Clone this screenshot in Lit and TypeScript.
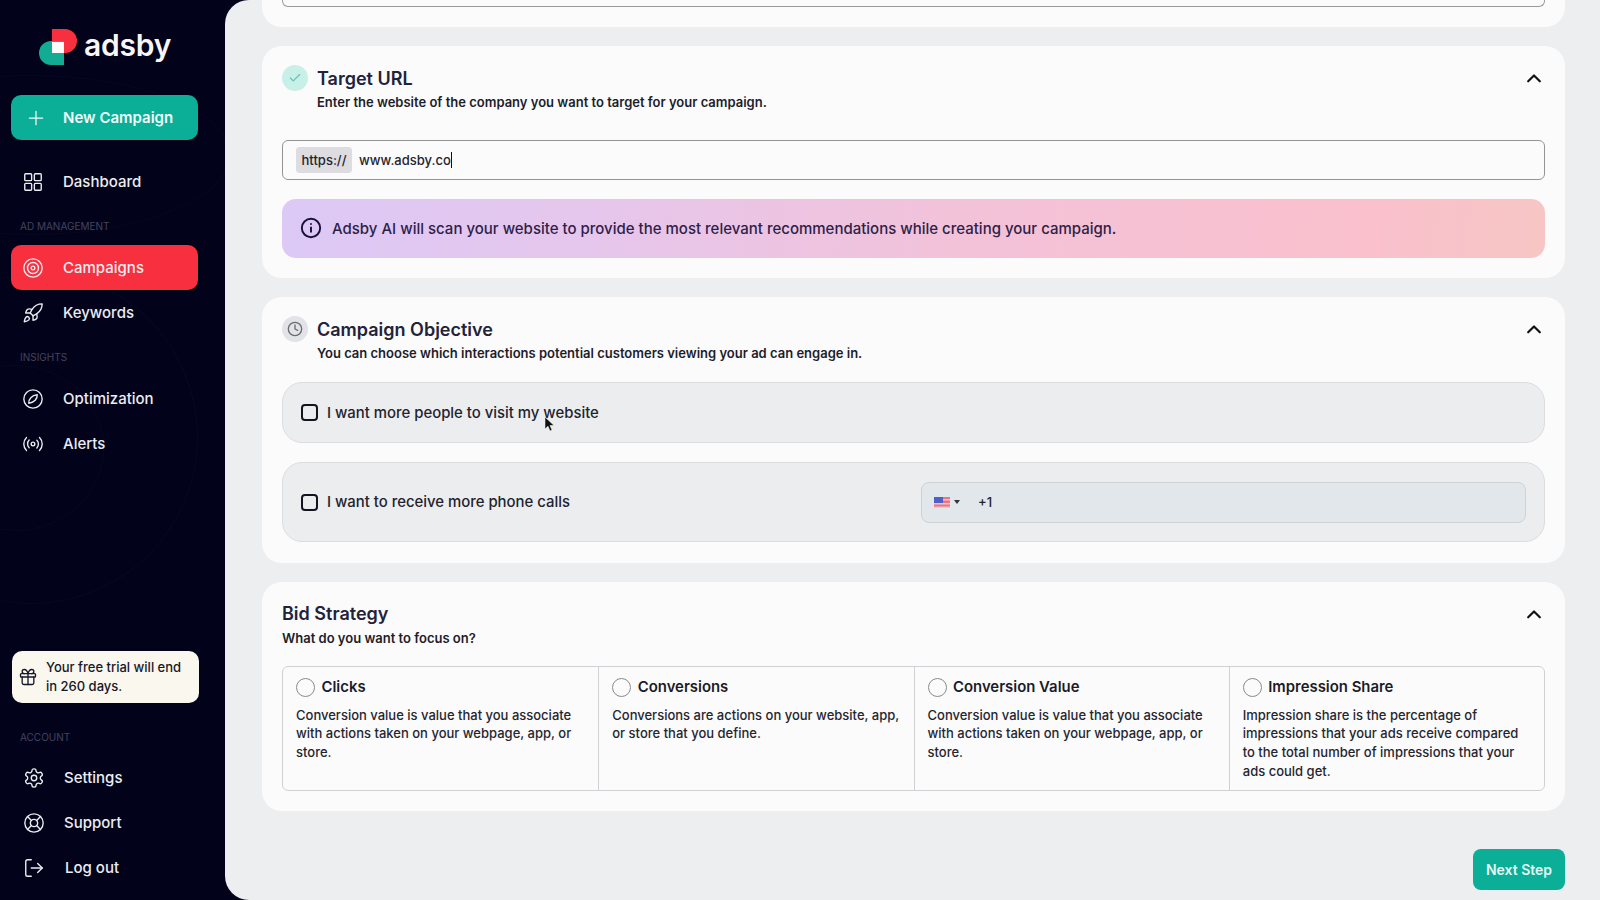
import { LitElement, html, css, svg } from "lit";
import { customElement } from "lit/decorators.js";

const icons: Record<string, unknown> = {
  plus: svg`<path d="M12 4v16M4 12h16"/>`,
  grid: svg`<rect x="3" y="3" width="7.5" height="7.5" rx="1"/><rect x="13.5" y="3" width="7.5" height="7.5" rx="1"/><rect x="13.5" y="13.5" width="7.5" height="7.5" rx="1"/><rect x="3" y="13.5" width="7.5" height="7.5" rx="1"/>`,
  target: svg`<circle cx="12" cy="12" r="10"/><circle cx="12" cy="12" r="6"/><circle cx="12" cy="12" r="2"/>`,
  rocket: svg`<path d="M4.5 16.5c-1.5 1.26-2 5-2 5s3.74-.5 5-2c.71-.84.7-2.13-.09-2.91a2.18 2.18 0 0 0-2.91-.09z"/><path d="m12 15-3-3a22 22 0 0 1 2-3.95A12.88 12.88 0 0 1 22 2c0 2.72-.78 7.5-6 11a22.35 22.35 0 0 1-4 2z"/><path d="M9 12H4s.55-3.03 2-4c1.62-1.08 5 0 5 0"/><path d="M12 15v5s3.03-.55 4-2c1.08-1.62 0-5 0-5"/>`,
  compass: svg`<circle cx="12" cy="12" r="10"/><path d="M16.6 7.4c.4 4.4-3.2 8.6-9.2 9.2-.4-4.4 3.2-8.6 9.2-9.2z"/>`,
  radio: svg`<path d="M4.9 19.1C1 15.2 1 8.8 4.9 4.9"/><path d="M7.8 16.2c-2.3-2.3-2.3-6.1 0-8.5"/><circle cx="12" cy="12" r="2"/><path d="M16.2 7.8c2.3 2.3 2.3 6.1 0 8.5"/><path d="M19.1 4.9C23 8.8 23 15.1 19.1 19"/>`,
  settings: svg`<path d="M12.22 2h-.44a2 2 0 0 0-2 2v.18a2 2 0 0 1-1 1.73l-.43.25a2 2 0 0 1-2 0l-.15-.08a2 2 0 0 0-2.73.73l-.22.38a2 2 0 0 0 .73 2.73l.15.1a2 2 0 0 1 1 1.72v.51a2 2 0 0 1-1 1.74l-.15.09a2 2 0 0 0-.73 2.73l.22.38a2 2 0 0 0 2.73.73l.15-.08a2 2 0 0 1 2 0l.43.25a2 2 0 0 1 1 1.73V20a2 2 0 0 0 2 2h.44a2 2 0 0 0 2-2v-.18a2 2 0 0 1 1-1.73l.43-.25a2 2 0 0 1 2 0l.15.08a2 2 0 0 0 2.73-.73l.22-.39a2 2 0 0 0-.73-2.73l-.15-.08a2 2 0 0 1-1-1.74v-.5a2 2 0 0 1 1-1.74l.15-.09a2 2 0 0 0 .73-2.73l-.22-.38a2 2 0 0 0-2.73-.73l-.15.08a2 2 0 0 1-2 0l-.43-.25a2 2 0 0 1-1-1.73V4a2 2 0 0 0-2-2z"/><circle cx="12" cy="12" r="3"/>`,
  support: svg`<circle cx="12" cy="12" r="10"/><circle cx="12" cy="12" r="4"/><path d="m4.93 4.93 4.24 4.24M14.83 9.17l4.24-4.24M14.83 14.83l4.24 4.24M9.17 14.83l-4.24 4.24"/>`,
  logout: svg`<path d="M9 21H5a2 2 0 0 1-2-2V5a2 2 0 0 1 2-2h4"/><path d="m16 17 5-5-5-5"/><path d="M21 12H9"/>`,
  gift: svg`<rect x="3" y="8" width="18" height="4" rx="1"/><path d="M12 8v13"/><path d="M19 12v7a2 2 0 0 1-2 2H7a2 2 0 0 1-2-2v-7"/><path d="M7.5 8a2.5 2.5 0 0 1 0-5A4.8 8 0 0 1 12 8a4.8 8 0 0 1 4.5-5 2.5 2.5 0 0 1 0 5"/>`,
  clock: svg`<circle cx="12" cy="12" r="10"/><path d="M12 6v6l4 2"/>`,
  check: svg`<path d="M20 6 9 17l-5-5"/>`,
  info: svg`<circle cx="12" cy="12" r="10"/><path d="M12 16v-4.5M12 7.6h.01"/>`,
  chevron: svg`<path d="m5 16 7-7 7 7"/>`,
};

function icon(name: string, cls: string) {
  return html`<svg class=${cls} viewBox="0 0 24 24" fill="none" stroke="currentColor" stroke-linecap="round" stroke-linejoin="round">${icons[name]}</svg>`;
}

const bids = [
  { t: "Clicks", d: "Conversion value is value that you associate with actions taken on your webpage, app, or store." },
  { t: "Conversions", d: "Conversions are actions on your website, app, or store that you define." },
  { t: "Conversion Value", d: "Conversion value is value that you associate with actions taken on your webpage, app, or store." },
  { t: "Impression Share", d: "Impression share is the percentage of impressions that your ads receive compared to the total number of impressions that your ads could get." },
];

@customElement("app-root")
export class AppRoot extends LitElement {
  static styles = css`
    :host { display: flex; width: 1600px; height: 900px; overflow: hidden; background: #02021b; font-family: Inter, "Liberation Sans", sans-serif; color: #17172a; }
    * { box-sizing: border-box; }

    .side { position: relative; width: 225px; flex: none; height: 900px; padding: 0 0 10px 11px; display: flex; flex-direction: column; color: #f1f1f4; overflow: hidden; }
    .ring { position: absolute; border-radius: 50%; border: 1px solid rgba(255,255,255,.025); pointer-events: none; }
    .ring.a { left: -72px; top: 365px; width: 176px; height: 166px; }
    .ring.b { left: -136px; top: 270px; width: 334px; height: 334px; }
    .ring.c { left: -170px; top: 75px; width: 400px; height: 160px; }
    .logo { position: relative; height: 95px; padding: 28px 0 0 28px; display: flex; align-items: flex-start; gap: 6px; }
    .logo svg { width: 39px; height: 38px; flex: none; }
    .logo span { font-weight: 600; font-size: 30px; line-height: 34px; color: #f7f7f8; letter-spacing: -.2px; }
    .item { position: relative; width: 187px; height: 45px; border-radius: 10px; display: flex; align-items: center; padding-left: 11px; gap: 19px; font-size: 15px; font-weight: 500; color: #ecedf1; flex: none; }
    .item .ic { width: 22px; height: 22px; stroke-width: 1.5; flex: none; }
    .item.new { background: #0bae96; font-weight: 600; color: #f2fbf9; font-size: 15px; padding-left: 15px; gap: 17px; margin-bottom: 19px; }
    .item.new .ic { width: 20px; height: 20px; stroke-width: 1.5; }
    .item.red { background: #f72f3f; }
    .label { position: relative; font-size: 10px; line-height: 12px; color: #43445f; padding-left: 9px; text-transform: uppercase; margin: 16px 0 13px; flex: none; }
    .acct .item { padding-left: 12px; gap: 19px; }
    .acct .item.out { gap: 20px; }
    .trial { position: relative; margin: auto 0 0 1px; width: 187px; height: 52px; background: #f9f7ee; border-radius: 10px; display: flex; align-items: center; gap: 8px; padding-left: 6px; color: #17172a; font-size: 13px; font-weight: 500; line-height: 19px; flex: none; }
    .trial .ic { width: 20px; height: 20px; stroke-width: 1.6; flex: none; }
    .acct { position: relative; margin-top: 28px; }
    .acct .label { margin-top: 0; margin-bottom: 12px; }

    .main { flex: 1; height: 900px; background: #eceef0; border-radius: 24px 0 0 24px; padding: 0 35px 0 37px; display: flex; flex-direction: column; gap: 19px; overflow: hidden; position: relative; }
    .card { background: #fbfbfb; border-radius: 20px; padding: 20px; flex: none; }
    .card.stub { height: 27px; padding: 0 20px 20px; border-radius: 0 0 20px 20px; }
    .stubfield { height: 7px; border: 1.5px solid #9a9a9a; border-top: 0; border-radius: 0 0 6px 6px; }
    .head { display: flex; align-items: center; height: 24px; }
    .badge { width: 26px; height: 26px; border-radius: 50%; display: flex; align-items: center; justify-content: center; margin-right: 9px; flex: none; }
    .badge.ok { background: #c9f0e8; color: #5cc6b0; }
    .badge.ok svg { width: 14px; height: 14px; stroke-width: 2; }
    .badge.wait { background: #e2e3e6; color: #696b73; }
    .badge.wait svg { width: 16px; height: 16px; stroke-width: 2; }
    h2 { margin: 0; padding-top: 2px; font-size: 18px; line-height: 24px; font-weight: 600; color: #22223a; flex: 1; }
    .bidcard h2 { padding-top: 0; }
    .chev { width: 20px; height: 20px; stroke-width: 2.6; color: #111; margin-right: 1px; flex: none; }
    .sub { font-size: 13px; line-height: 20px; font-weight: 600; color: #1d1d2b; margin: 2px 0 0 35px; }
    .sub.flush { margin-left: 0; }

    .url { height: 40px; margin-top: 28px; border: 1.5px solid #949494; border-radius: 6px; display: flex; align-items: center; padding-left: 13px; font-size: 13px; font-weight: 500; color: #24242e; }
    .chip { height: 26px; width: 56px; background: #dcdce1; border-radius: 4px; display: flex; align-items: center; justify-content: center; margin-right: 7px; }
    .caret { width: 1px; height: 16px; background: #111; }
    .info { height: 59px; margin-top: 19px; border-radius: 14px; background: linear-gradient(95deg, #dcc9f6 0%, #e6c6ec 25%, #f3c2d8 55%, #fac0cd 85%, #f7c6c4 100%); display: flex; align-items: center; padding: 0 0 1px 18px; gap: 10px; font-size: 15px; font-weight: 500; color: #2e2148; }
    .info svg { width: 22px; height: 22px; stroke-width: 2.1; color: #17103a; flex: none; }

    .opt { background: #ecedef; border: 1px solid #dcdde0; border-radius: 20px; display: flex; align-items: center; padding-left: 18px; font-size: 14.9px; font-weight: 500; color: #23232e; margin-top: 19px; position: relative; }
    .opt.one { height: 61px; margin-top: 19px; }
    .opt.two { height: 80px; padding-right: 18px; margin-bottom: 1px; }
    .box { width: 17px; height: 17px; border: 2px solid #14141f; border-radius: 4px; margin-right: 9px; flex: none; }
    .phone { margin-left: auto; width: 605px; height: 41px; border: 1px solid #cfd2d5; border-radius: 8px; background: #e1e7ea; display: flex; align-items: center; padding-left: 12px; font-size: 13px; }
    .phone svg.flag { width: 16px; height: 11px; flex: none; filter: blur(.3px); }
    .tri { width: 0; height: 0; border: 3px solid transparent; border-top: 4px solid #333; border-bottom: 0; margin: 0 18px 0 4px; }
    .cursor { position: absolute; left: 262px; top: 34px; width: 10px; height: 15px; }

    .bids { margin-top: 18px; height: 125px; border: 1.5px solid #d0d1d4; border-radius: 6px; display: grid; grid-template-columns: repeat(4, 1fr); }
    .bid { padding: 10px 13px 0 13px; border-left: 1.5px solid #d0d1d4; }
    .bid:first-child { border-left: 0; }
    .bidh { display: flex; align-items: center; gap: 6.5px; height: 20px; font-size: 14.9px; font-weight: 600; color: #1b1b28; }
    .radio { width: 19px; height: 19px; border: 1.5px solid #8a8a8a; border-radius: 50%; flex: none; }
    .bid p { margin: 8.5px 0 0; font-size: 13px; line-height: 18.7px; font-weight: 500; color: #25252f; }

    .next { align-self: flex-end; width: 92px; height: 41px; margin-top: 19px; background: #0bae96; color: #e6f8f4; border-radius: 8px; display: flex; align-items: center; justify-content: center; font-size: 14px; font-weight: 600; flex: none; }
  `;

  render() {
    return html`
      <aside class="side">
        <div class="ring a"></div><div class="ring b"></div><div class="ring c"></div>
        <div class="logo">
          <svg viewBox="0 0 39 38">
            <path d="M13 1H26a12 12 0 0 1 0 24H13z" fill="#f72f3f"/>
            <path d="M25 13V37H12a12 12 0 0 1 0-24z" fill="#12ab94"/>
            <rect x="13" y="14" width="12" height="11" fill="#fbfbfb"/>
          </svg>
          <span>adsby</span>
        </div>
        <div class="item new">${icon("plus", "ic")}New Campaign</div>
        <div class="item">${icon("grid", "ic")}Dashboard</div>
        <div class="label">Ad Management</div>
        <div class="item red">${icon("target", "ic")}Campaigns</div>
        <div class="item">${icon("rocket", "ic")}Keywords</div>
        <div class="label">Insights</div>
        <div class="item">${icon("compass", "ic")}Optimization</div>
        <div class="item">${icon("radio", "ic")}Alerts</div>
        <div class="trial">${icon("gift", "ic")}<span>Your free trial will end<br />in 260 days.</span></div>
        <div class="acct">
          <div class="label">Account</div>
          <div class="item">${icon("settings", "ic")}Settings</div>
          <div class="item">${icon("support", "ic")}Support</div>
          <div class="item out">${icon("logout", "ic")}Log out</div>
        </div>
      </aside>
      <main class="main">
        <section class="card stub"><div class="stubfield"></div></section>

        <section class="card">
          <div class="head">
            <div class="badge ok">${icon("check", "")}</div>
            <h2>Target URL</h2>
            ${icon("chevron", "chev")}
          </div>
          <div class="sub">Enter the website of the company you want to target for your campaign.</div>
          <div class="url"><span class="chip">https://</span><span>www.adsby.co</span><span class="caret"></span></div>
          <div class="info">${icon("info", "")}<span>Adsby AI will scan your website to provide the most relevant recommendations while creating your campaign.</span></div>
        </section>

        <section class="card">
          <div class="head">
            <div class="badge wait">${icon("clock", "")}</div>
            <h2>Campaign Objective</h2>
            ${icon("chevron", "chev")}
          </div>
          <div class="sub">You can choose which interactions potential customers viewing your ad can engage in.</div>
          <div class="opt one">
            <span class="box"></span>I want more people to visit my website
            <svg class="cursor" viewBox="0 0 10 15"><path d="M0 0v12l3-2.8 2 4.8 2-.9-2-4.6h4z" fill="#111" stroke="#fff" stroke-width=".5"/></svg>
          </div>
          <div class="opt two">
            <span class="box"></span>I want to receive more phone calls
            <div class="phone">
              <svg class="flag" viewBox="0 0 16 11"><rect width="16" height="11" fill="#e8757f"/><rect y="2" width="16" height="1.5" fill="#f0c4cb"/><rect y="6" width="16" height="1.5" fill="#f0c4cb"/><rect y="9.5" width="16" height="1.5" fill="#f0c4cb"/><rect width="9" height="6" fill="#5060c8"/></svg>
              <span class="tri"></span>+1
            </div>
          </div>
        </section>

        <section class="card bidcard">
          <div class="head"><h2>Bid Strategy</h2>${icon("chevron", "chev")}</div>
          <div class="sub flush">What do you want to focus on?</div>
          <div class="bids">
            ${bids.map((b) => html`<div class="bid"><div class="bidh"><span class="radio"></span>${b.t}</div><p>${b.d}</p></div>`)}
          </div>
        </section>

        <div class="next">Next Step</div>
      </main>
    `;
  }
}
